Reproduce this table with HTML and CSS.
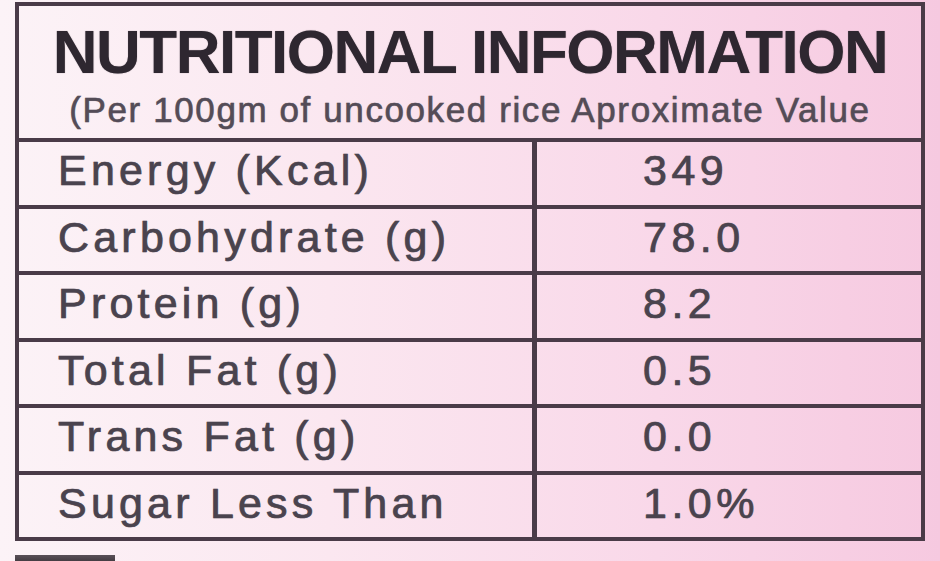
FILE: index.html
```html
<!DOCTYPE html>
<html lang="en">
<head>
<meta charset="utf-8">
<title>Nutritional Information</title>
<link rel="stylesheet" href="styles.css">
</head>
<body>
<div class="page">
  <div class="panel">
    <div class="header">
      <div class="title">NUTRITIONAL INFORMATION</div>
      <div class="subtitle">(Per 100gm of uncooked rice Aproximate Value</div>
    </div>
    <div class="row"><div class="label">Energy (Kcal)</div><div class="value">349</div></div>
    <div class="row"><div class="label">Carbohydrate (g)</div><div class="value">78.0</div></div>
    <div class="row"><div class="label">Protein (g)</div><div class="value">8.2</div></div>
    <div class="row"><div class="label">Total Fat (g)</div><div class="value">0.5</div></div>
    <div class="row"><div class="label">Trans Fat (g)</div><div class="value">0.0</div></div>
    <div class="row"><div class="label">Sugar Less Than</div><div class="value">1.0%</div></div>
  </div>
  <div class="foot-bar"></div>
</div>
</body>
</html>
```

FILE: styles.css
```css
html, body {
  margin: 0;
  padding: 0;
}
body {
  width: 940px;
  height: 561px;
  overflow: hidden;
  font-family: "Liberation Sans", Arial, sans-serif;
  background: linear-gradient(90deg, #fcf3f7 0%, #fbe7f0 35%, #f9d8e9 70%, #f6c9e0 100%);
}
.page {
  padding: 2px 0 0 15px;
}
.panel {
  width: 902px;
  border: 4px solid #4a3b48;
  display: flex;
  flex-direction: column;
}
.header {
  height: 132px;
  display: flex;
  flex-direction: column;
  align-items: center;
  padding-top: 14px;
  box-sizing: border-box;
}
.title {
  font-size: 62px;
  line-height: 63px;
  font-weight: bold;
  color: #2e2730;
  letter-spacing: -1.5px;
  text-shadow: 0 0 1px rgba(40, 30, 40, 0.5);
}
.subtitle {
  margin-top: 9px;
  font-size: 35px;
  line-height: 35px;
  color: #544c57;
  letter-spacing: 1.6px;
  -webkit-text-stroke: 0.5px #544c57;
  text-shadow: 0 0 1px rgba(70, 60, 70, 0.5);
}
.row {
  height: 62.5px;
  border-top: 4px solid #4a3b48;
  display: grid;
  grid-template-columns: 518px 1fr;
}
.label, .value {
  display: flex;
  align-items: center;
  padding-bottom: 5px;
  font-size: 43px;
  color: #4a434e;
  letter-spacing: 4.2px;
  -webkit-text-stroke: 0.6px #4a434e;
  text-shadow: 0 0 1px rgba(60, 50, 60, 0.6);
}
.label {
  padding-left: 39px;
  border-right: 5px solid #4a3b48;
}
.value {
  padding-left: 106px;
  letter-spacing: 4.5px;
}
.foot-bar {
  margin-top: 14px;
  width: 100px;
  height: 8px;
  background: linear-gradient(180deg, #5a5058, #3e363c);
}
```
